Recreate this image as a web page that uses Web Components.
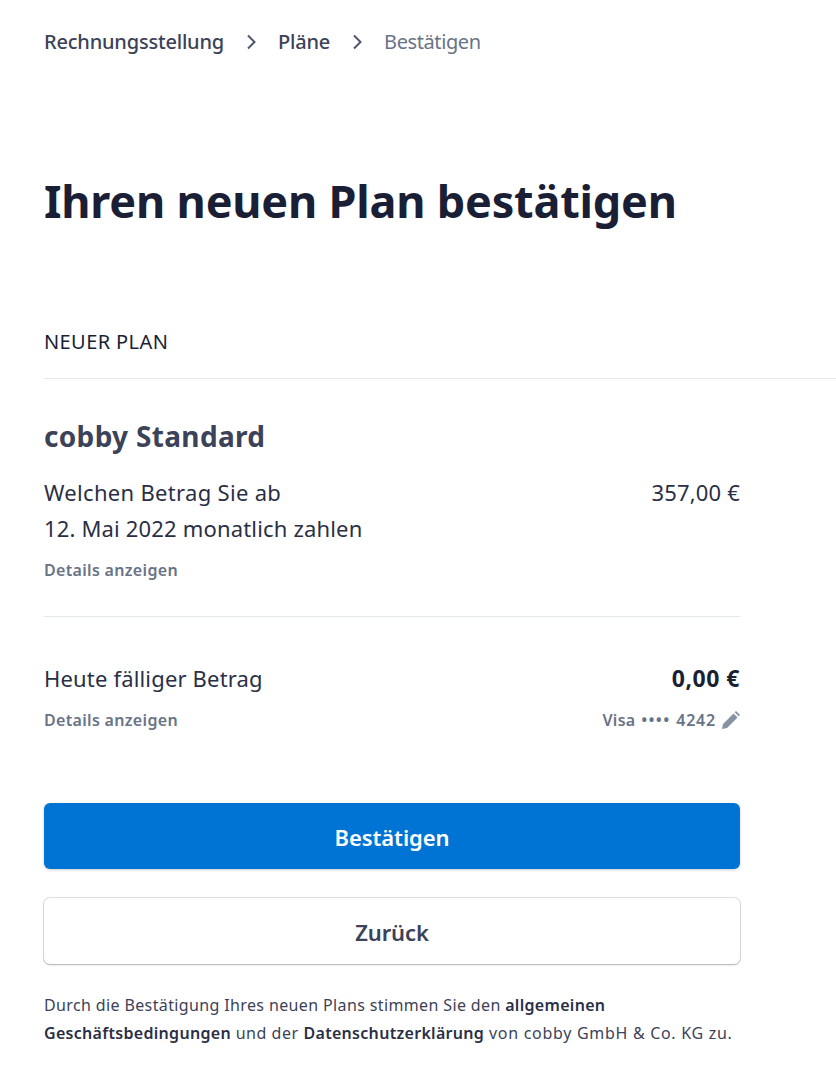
<!DOCTYPE html>
<html lang="de"><head><meta charset="utf-8">
<style>
html,body{margin:0;padding:0;background:#fff}
body{font-family:"Noto Sans","Open Sans",sans-serif;color:#1a1f36;overflow:hidden;height:1088px}
b{font-weight:600;color:#2a2f45;letter-spacing:.3px}
.l1{letter-spacing:.55px}
.l2{letter-spacing:.7px}
</style></head><body>
<confirm-page>
  <bread-crumbs slot="crumbs"></bread-crumbs>
  <span slot="title">Ihren neuen Plan bestätigen</span>
  <span slot="section">NEUER PLAN</span>
  <plan-summary slot="summary"></plan-summary>
  <action-button slot="primary" kind="primary">Bestätigen</action-button>
  <action-button slot="secondary">Zurück</action-button>
  <span slot="legal">Durch die Bestätigung Ihres neuen Plans stimmen Sie den <b>allgemeinen</b> <b>Geschäftsbedingungen</b><span class="l1"> und der </span><b>Datenschutzerklärung</b><span class="l2"> von cobby GmbH &amp; Co. KG zu.</span></span>
</confirm-page>
<script>
function def(name, html){
  customElements.define(name, class extends HTMLElement{
    constructor(){super();this.attachShadow({mode:'open'}).innerHTML=html;}
  });
}
const chevron='<svg width="12" height="18" viewBox="0 0 12 18" fill="none" stroke="#4f566b" stroke-width="2"><path d="M2 2.500l6.500 6.500-6.500 6.500"/></svg>';
def('bread-crumbs',`<style>
:host{display:flex;align-items:center;font-size:20px;line-height:28px}
.a{color:#3c4257;font-weight:500;letter-spacing:-.2px}.c{color:#697386;letter-spacing:-.4px}
svg{margin:0 20px 0 22px;display:block}
</style><span class="a">Rechnungsstellung</span>${chevron}<span class="a">Pläne</span>${chevron}<span class="c">Bestätigen</span>`);
def('confirm-page',`<style>
:host{display:block;padding:28px 0 0 44px}
h1{margin:113px 0 0;font-size:45px;line-height:64px;font-weight:700;color:#1a1f36;letter-spacing:-.2px}
.sec{margin-top:95px;font-size:20px;line-height:28px;letter-spacing:.4px;color:#1a1f36;padding-bottom:22px;border-bottom:1px solid #e3e8ee}
.body{width:696px}
.p{margin-top:71px}
.s{margin-top:29px}
.legal{margin-top:27px;font-size:16px;line-height:28px;color:#3c4257;letter-spacing:.37px}
</style>
<slot name="crumbs"></slot>
<h1><slot name="title"></slot></h1>
<div class="sec"><slot name="section"></slot></div>
<div class="body">
<slot name="summary"></slot>
<div class="p"><slot name="primary"></slot></div>
<div class="s"><slot name="secondary"></slot></div>
<div class="legal"><slot name="legal"></slot></div>
</div>`);
def('plan-summary',`<style>
:host{display:block;color:#1a1f36}
h2{margin:37px 0 0;font-size:28px;line-height:40px;font-weight:700;color:#3c4257;letter-spacing:.33px}
.row{display:flex;justify-content:space-between;font-size:22px;line-height:36px;letter-spacing:.17px;color:#2a2f45}
.first{margin-top:18px}
.wide{letter-spacing:.31px}
.small{font-size:16px;line-height:24px;font-weight:600;color:#697386;letter-spacing:.32px;display:flex;justify-content:space-between;align-items:center}
.det{margin-top:12px}
hr{border:0;border-top:1px solid #e3e8ee;margin:34px 0 0}
.today{margin-top:43px}
.today b{font-weight:700;color:#1a1f36;font-size:23px;letter-spacing:.5px}
.visa{display:flex;align-items:center;gap:6px;word-spacing:1.200px}
.dots{letter-spacing:1.300px}
.num{letter-spacing:.8px}
.visa svg{display:block}
</style>
<h2>cobby Standard</h2>
<div class="row first"><span><span class="wide">Welchen Betrag Sie ab</span><br>12. Mai 2022 monatlich zahlen</span><span>357,00 €</span></div>
<div class="small det"><span>Details anzeigen</span></div>
<hr>
<div class="row today"><span>Heute fälliger Betrag</span><b>0,00 €</b></div>
<div class="small" style="margin-top:12px"><span>Details anzeigen</span><span class="visa"><span>Visa <span class="dots">••••</span> <span class="num">4242</span></span><svg width="18" height="18" viewBox="0 0 18 18" fill="#8792a2"><path d="M0 18l1-5L11.500 2.500l4 4L5 17zM12.700 1.300L14 0l4 4-1.300 1.300z"/></svg></span></div>`);
customElements.define('action-button',class extends HTMLElement{
  constructor(){super();const p=this.getAttribute('kind')==='primary';
  this.attachShadow({mode:'open'}).innerHTML=`<style>
  :host{display:block}
  .b{box-sizing:border-box;display:flex;align-items:center;justify-content:center;border-radius:6px;font-size:22px;font-weight:600;letter-spacing:-.1px;padding-top:${p?2:1}px;height:66px;
  ${p?'background:#0074d4;color:#fff;box-shadow:0 1px 3px rgba(0,0,0,.2)':'background:#fff;color:#3c4257;box-shadow:0 0 0 1px rgba(60,66,87,.16),0 1px 2px rgba(0,0,0,.22)'}}
  </style><div class="b"><slot></slot></div>`;}
});
</script>
</body></html>
